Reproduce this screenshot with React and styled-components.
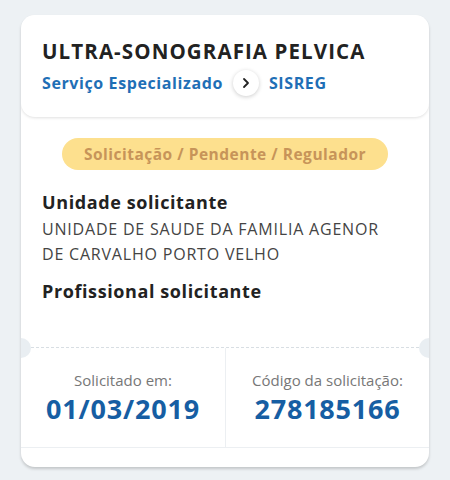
import React from 'react'
import styled, { createGlobalStyle } from 'styled-components'

const GlobalStyle = createGlobalStyle`
  html, body {
    margin: 0;
    padding: 0;
    background: #edf1f4;
  }
  body {
    font-family: 'Open Sans', Lato, sans-serif;
  }
`

const Page = styled.div`
  width: 450px;
  height: 480px;
  padding: 15px 21px 0 21px;
  box-sizing: border-box;
`

const Card = styled.div`
  position: relative;
  background: #fff;
  border-radius: 14px;
  box-shadow: 0 2px 3px rgba(0, 0, 0, 0.18);
  overflow: hidden;
  height: 452px;
  display: flex;
  flex-direction: column;
`

const Header = styled.div`
  background: #fff;
  border-radius: 0 0 14px 14px;
  box-shadow: 0 1px 3px rgba(0, 0, 0, 0.12);
  height: 102px;
  box-sizing: border-box;
  padding: 22px 21px 0;
  position: relative;
  z-index: 1;
`

const Title = styled.h1`
  margin: 0;
  font-size: 20.5px;
  line-height: 28px;
  font-weight: 700;
  color: #222;
  letter-spacing: 1.1px;
`

const Breadcrumb = styled.div`
  display: flex;
  align-items: center;
  gap: 10px;
  margin-top: 5px;
`

const Crumb = styled.span`
  color: #1f6fb6;
  font-size: 16px;
  line-height: 24px;
  font-weight: 700;
  letter-spacing: 0.6px;
`

const ChevronCircle = styled.span`
  width: 26px;
  height: 26px;
  border-radius: 50%;
  background: #fff;
  box-shadow: 0 1px 4px rgba(0, 0, 0, 0.2);
  display: flex;
  align-items: center;
  justify-content: center;
`

const Body = styled.div`
  padding: 21px 21px 0;
  height: 209px;
`

const BadgeRow = styled.div`
  display: flex;
  justify-content: center;
`

const Badge = styled.span`
  background: #fde08e;
  color: #c79459;
  font-size: 15.5px;
  line-height: 20px;
  font-weight: 700;
  border-radius: 16px;
  padding: 6px 0;
  width: 326px;
  box-sizing: border-box;
  text-align: center;
  letter-spacing: 0.5px;
`

const Label = styled.div`
  margin-top: ${(p) => p.top}px;
  font-size: 18px;
  line-height: 24px;
  font-weight: 700;
  color: #222;
  letter-spacing: 0.6px;
`

const Value = styled.div`
  font-size: 16px;
  line-height: 25px;
  color: #444;
  margin-top: 3px;
  width: 360px;
  letter-spacing: 0.8px;
`

const Footer = styled.div`
  position: relative;
  display: grid;
  grid-template-columns: 1fr 1fr;
  border-top: 1px dashed #d8dee3;
  border-bottom: 1px solid #eceff2;
  height: 99px;
`

const Notch = styled.span`
  position: absolute;
  top: -10px;
  ${(p) => p.side}: -10px;
  width: 20px;
  height: 20px;
  border-radius: 50%;
  background: #e9eef2;
`

const Cell = styled.div`
  display: flex;
  flex-direction: column;
  align-items: center;
  padding-top: 21px;
  border-left: ${(p) => (p.divider ? '1px solid #eceff2' : 'none')};
`

const CellLabel = styled.span`
  font-size: 15px;
  line-height: 22px;
  color: #777;
`

const CellValue = styled.span`
  font-size: 27px;
  line-height: 34px;
  font-weight: 700;
  color: #165ea3;
  margin-top: 1px;
  letter-spacing: 0.8px;
`

export default function App() {
  return (
    <>
      <GlobalStyle />
      <Page>
        <Card>
          <Header>
            <Title>ULTRA-SONOGRAFIA PELVICA</Title>
            <Breadcrumb>
              <Crumb>Serviço Especializado</Crumb>
              <ChevronCircle>
                <svg width="12" height="12" viewBox="0 0 12 12">
                  <path d="M4 2 L8 6 L4 10" fill="none" stroke="#222" strokeWidth="1.8" strokeLinecap="round" strokeLinejoin="round" />
                </svg>
              </ChevronCircle>
              <Crumb>SISREG</Crumb>
            </Breadcrumb>
          </Header>
          <Body>
            <BadgeRow>
              <Badge>Solicitação / Pendente / Regulador</Badge>
            </BadgeRow>
            <Label top={20}>Unidade solicitante</Label>
            <Value>UNIDADE DE SAUDE DA FAMILIA AGENOR DE CARVALHO PORTO VELHO</Value>
            <Label top={12}>Profissional solicitante</Label>
          </Body>
          <Footer>
            <Notch side="left" />
            <Notch side="right" />
            <Cell>
              <CellLabel>Solicitado em:</CellLabel>
              <CellValue>01/03/2019</CellValue>
            </Cell>
            <Cell divider>
              <CellLabel>Código da solicitação:</CellLabel>
              <CellValue>278185166</CellValue>
            </Cell>
          </Footer>
        </Card>
      </Page>
    </>
  )
}
